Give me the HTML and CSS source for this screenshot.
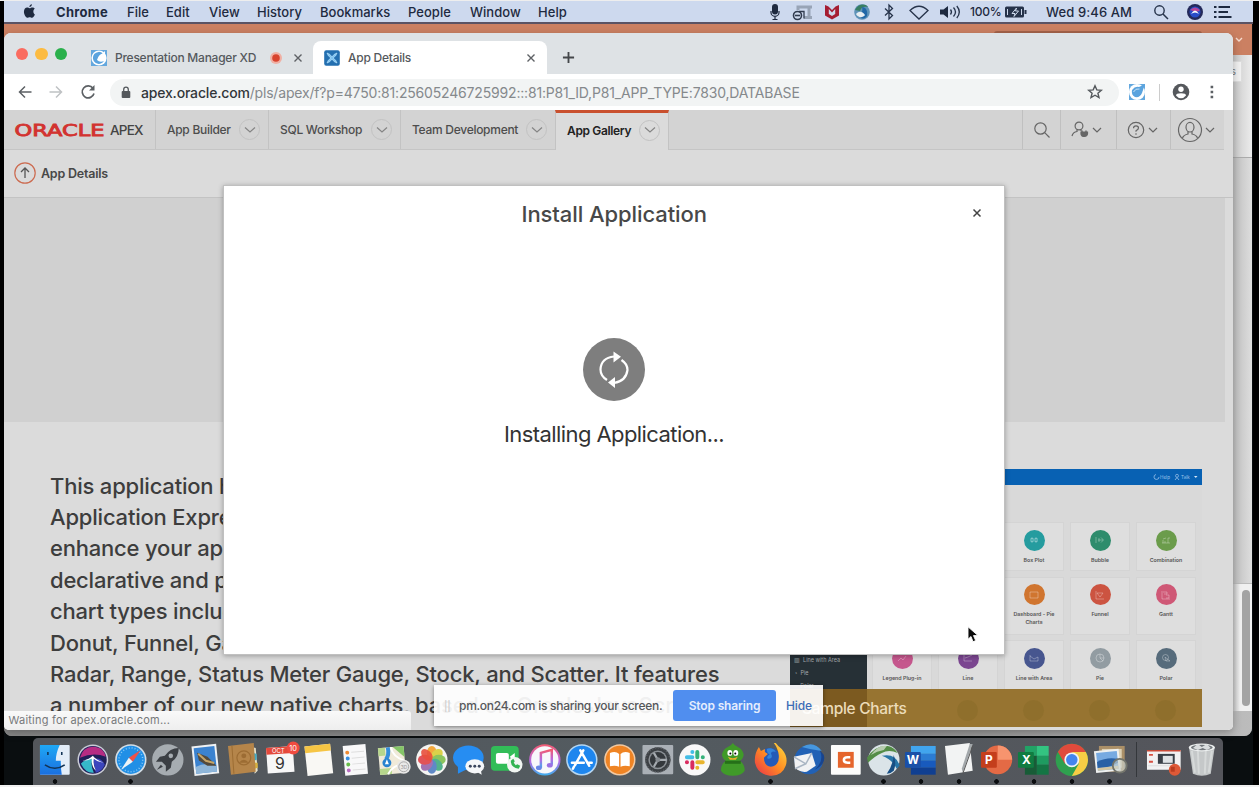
FILE: index.html
```html
<!DOCTYPE html>
<html lang="en">
<head>
<meta charset="utf-8">
<title>App Details</title>
<link rel="stylesheet" href="styles.css">
</head>
<body>
<div class="desktop">

  <!-- Window behind the browser -->
  <div class="back-window">
    <div class="back-title"><span class="back-field"></span><svg class="back-caret" viewBox="0 0 8 6"><path d="M1 1l3 3 3-3" fill="none" stroke="#f6dccf" stroke-width="1.4"/></svg></div>
    <div class="back-ribbon"><span class="back-btn">s</span></div>
    <div class="back-body"></div>
    <div class="back-scroll"><span></span></div>
    <div class="back-foot"></div>
  </div>

  <div class="menubar">
    <div class="menus">
      <svg class="apple" viewBox="0 0 14 16"><path d="M9.6 0.6c.1 1.500-1.200 3-2.700 3C6.700 2.200 8 .8 9.600.6zM12.800 11.700c-.8 1.900-1.900 3.500-3.200 3.500-.9 0-1.300-.6-2.400-.6s-1.500.6-2.400.6C3 15.200 1 11.800 1 8.800c0-2.900 1.700-4.500 3.500-4.500 1.100 0 1.900.7 2.700.7.700 0 1.600-.8 2.900-.8 1 0 2 .5 2.600 1.400-2.200 1.300-1.900 4.900.1 6.100z" fill="#1e2a40"/></svg>
      <b class="m-chrome">Chrome</b><span>File</span><span>Edit</span><span>View</span><span>History</span><span class="m-book">Bookmarks</span><span>People</span><span>Window</span><span>Help</span>
    </div>
    <div class="tray">
      <svg width="14" height="18" viewBox="0 0 14 18"><rect x="4" y="1" width="6" height="10.500" rx="3" fill="#1e2a40"/><path d="M3 8v1.500a4 3.800 0 0 0 8 0V8M7 13v3M4.500 16.500h5" fill="none" stroke="#1e2a40" stroke-width="1.200"/></svg>
      <svg width="22" height="18" viewBox="0 0 22 18"><path d="M6 7V4h14M12 14.500h8M17 4v10" stroke="#98a4b6" stroke-width="3" fill="none"/><circle cx="5.500" cy="12.500" r="4" fill="#cdd9ec" stroke="#303b4e" stroke-width="1.600"/><path d="M3 12.500h5" stroke="#303b4e" stroke-width="1.600"/><path d="M7 8.500h5v7" stroke="#303b4e" stroke-width="1.300" fill="none"/></svg>
      <svg width="18" height="18" viewBox="0 0 16 18"><path d="M1 2l3.500 1.500L8 7l3.500-3.500L15 2v10.500L8 16.500 1 12.500z" fill="#a51d32"/><path d="M4.800 6v5L8 13l3.200-2V6L8 9.500z" fill="#cdd9ec"/></svg>
      <svg width="18" height="18" viewBox="0 0 18 18"><circle cx="9" cy="9" r="7.800" fill="#5f93b8"/><path d="M2 7C5 1 12 0 15 4c-4-1-7 0-8 4z" fill="#387e62"/><path d="M6 12c3-1 4-5 3-8 4 0 6 4 5 9-3 4-7 3-8-1z" fill="#2168a7"/><path d="M3 11c3-3 6-3 9 1-2 3-7 3-9-1z" fill="#e7eef2"/></svg>
      <svg width="12" height="18" viewBox="0 0 12 18"><path d="M2 5.500l7.500 7L6 16V2l3.500 3.500L2 12.500" fill="none" stroke="#26334a" stroke-width="1.300"/></svg>
      <svg width="22" height="18" viewBox="0 0 22 18"><path d="M2 7.500Q11-1 20 7.500L11 16z" fill="none" stroke="#26334a" stroke-width="1.300"/></svg>
      <svg width="24" height="18" viewBox="0 0 24 18"><path d="M1 6.500h3.500L9 3v12l-4.500-3.500H1z" fill="#1e2a40"/><path d="M11.500 6.500q2 2.500 0 5M14.500 4.500q4 4.500 0 9M17.800 3q5 6 0 12" fill="none" stroke="#26334a" stroke-width="1.300"/></svg>
      <span class="t-pct">100%</span>
      <svg width="24" height="18" viewBox="0 0 24 18"><rect x="1" y="3.500" width="19" height="11" rx="1.500" fill="#26334a"/><path d="M21.500 7v4" stroke="#26334a" stroke-width="2"/><path d="M3.500 6v6M17.500 6v6M8 10.500h3l-1 3 4.500-5.500h-3l1-3z" stroke="#cdd9ec" stroke-width="1" fill="#26334a"/></svg>
      <span class="t-clock">Wed 9:46 AM</span>
      <svg width="18" height="18" viewBox="0 0 18 18"><circle cx="7.500" cy="7.500" r="4.700" fill="none" stroke="#26334a" stroke-width="1.400"/><path d="M11 11l5 5" stroke="#26334a" stroke-width="1.500"/></svg>
      <svg width="18" height="18" viewBox="0 0 18 18"><circle cx="9" cy="9" r="8" fill="#242a5b"/><circle cx="9" cy="9" r="5.500" fill="#284cc8"/><path d="M4 7q5-5 10 0-2 3-10 0" fill="#b5469b"/><path d="M5 11q4-7 8 0-4-3-8 0" fill="#fff"/></svg>
      <svg width="20" height="18" viewBox="0 0 20 18"><path d="M1 4h2.500M1 9h2.500M1 14h2.500" stroke="#1e2a40" stroke-width="2"/><path d="M5.500 4H17M5.500 9H15M5.500 14H18.500" stroke="#1e2a40" stroke-width="1.800"/></svg>
    </div>
  </div>

  <!-- Browser window -->
  <div class="browser">
    <div class="tabs">
      <div class="lights"><i class="red"></i><i class="yellow"></i><i class="green"></i></div>
      <div class="tab">
        <svg class="fav" viewBox="0 0 18 18"><rect x="1" y="1" width="16" height="16" fill="#64a8de"/><circle cx="9" cy="9" r="7.600" fill="#fff"/><path d="M13 4.500A6 6 0 1 0 14 12q-4 2-7-1Q9 4.500 13 4.500z" fill="#5aa3de"/><path d="M10 7l5-5v5z" fill="#fff"/></svg>
        <span class="tab-label">Presentation Manager XD</span>
        <svg class="rec" viewBox="0 0 14 14"><circle cx="7" cy="7" r="6" fill="#f0b0a4"/><circle cx="7" cy="7" r="3.800" fill="#d8432e"/></svg>
        <svg class="x" viewBox="0 0 10 10"><path d="M1.500 1.500l7 7M8.500 1.500l-7 7" stroke="#5e6165" stroke-width="1.400"/></svg>
      </div>
      <div class="tab active">
        <svg class="fav" viewBox="0 0 18 18"><rect x="1.200" y="1.200" width="15.600" height="15.600" rx="2" fill="#236fb0"/><path d="M4 4l3 1.500L9 8l2-2.500L14 4l-1.500 3L10 9l2.500 2L14 14l-3-1.500L9 10l-2 2.500L4 14l1.500-3L8 9 5.500 7z" fill="#7cc4f2" stroke="#b8e1fa" stroke-width=".7"/></svg>
        <span class="tab-label">App Details</span>
        <svg class="x" viewBox="0 0 10 10"><path d="M1.500 1.500l7 7M8.500 1.500l-7 7" stroke="#5e6165" stroke-width="1.400"/></svg>
      </div>
      <svg class="plus" viewBox="0 0 14 14"><path d="M7 1v12M1 7h12" stroke="#44474a" stroke-width="2"/></svg>
    </div>

    <div class="toolbar">
      <svg width="14" height="14" viewBox="0 0 14 14"><path d="M13.500 7H1.500M7 1.500L1.500 7 7 12.500" fill="none" stroke="#5c6064" stroke-width="1.500"/></svg>
      <svg width="14" height="14" viewBox="0 0 14 14"><path d="M.5 7h12M7 1.500L12.500 7 7 12.500" fill="none" stroke="#bfc2c4" stroke-width="1.500"/></svg>
      <svg width="16" height="16" viewBox="0 0 16 16"><path d="M13 4.200A6 6 0 1 0 14 9.500" fill="none" stroke="#5c6064" stroke-width="1.700"/><path d="M14.500 1v5.500H9z" fill="#5c6064"/></svg>
      <div class="omnibox">
        <svg width="10" height="13" viewBox="0 0 10 13"><rect x=".7" y="5" width="8.600" height="7" rx="1" fill="#55595d"/><path d="M2.700 5V3.500a2.300 2.300 0 0 1 4.600 0V5" fill="none" stroke="#55595d" stroke-width="1.300"/></svg>
        <span class="url"><b>apex.oracle.com</b>/pls/apex/f?p=4750:81:25605246725992:::81:P81_ID,P81_APP_TYPE:7830,DATABASE</span>
        <svg class="star" width="16" height="16" viewBox="0 0 16 16"><path d="M8 1.800l1.800 4.100 4.500.4-3.400 2.900 1.100 4.400L8 11.200l-4 2.400 1.100-4.400-3.400-2.900 4.500-.4z" fill="none" stroke="#55595d" stroke-width="1.400"/></svg>
      </div>
      <svg class="ext" viewBox="0 0 18 18"><path d="M1 1h16v16H1z" fill="#64a8de"/><circle cx="9" cy="9" r="8" fill="#fff"/><path d="M17 1l-3 9q-2 5-7 4-4-2-3-7 3-4 7-3z" fill="#5aa3de"/><path d="M5.500 9q2-4 6-3" stroke="#c8e3f7" fill="none"/></svg>
      <i class="tb-sep"></i>
      <svg class="avatar" viewBox="0 0 18 18"><circle cx="9" cy="9" r="8.300" fill="#55585c"/><circle cx="9" cy="6.300" r="2.700" fill="#fff"/><path d="M4 12.500q0-2.200 5-2.200t5 2.200q-2 2.700-5 2.700t-5-2.700" fill="#fff"/></svg>
      <svg class="kebab" viewBox="0 0 4 16"><path d="M.6 1.700h2.600v2.600H.6zM.6 6.700h2.600v2.600H.6zM.6 11.700h2.600v2.600H.6z" fill="#5c6064"/></svg>
    </div>

    <div class="page">
      <div class="apex-nav">
        <div class="brand"><svg class="oracle" viewBox="0 0 93 16"><text x="0.500" y="13.500" textLength="90" lengthAdjust="spacingAndGlyphs">ORACLE</text></svg><span>APEX</span></div>
        <div class="nav n1"><span>App Builder</span><i><svg viewBox="0 0 12 8"><path d="M1 1.500l5 4.500 5-4.500"/></svg></i></div>
        <div class="nav n2"><span>SQL Workshop</span><i><svg viewBox="0 0 12 8"><path d="M1 1.500l5 4.500 5-4.500"/></svg></i></div>
        <div class="nav n3"><span>Team Development</span><i><svg viewBox="0 0 12 8"><path d="M1 1.500l5 4.500 5-4.500"/></svg></i></div>
        <div class="nav n4 current"><span>App Gallery</span><i><svg viewBox="0 0 12 8"><path d="M1 1.500l5 4.500 5-4.500"/></svg></i></div>
        <div class="tools">
          <div class="tool t1"><svg width="18" height="18" viewBox="0 0 18 18"><circle cx="7.500" cy="7.500" r="5.700"/><path d="M11.700 11.700l4.800 4.800"/></svg></div>
          <div class="tool t2"><svg width="18" height="18" viewBox="0 0 18 18"><circle cx="8" cy="5" r="3.900"/><path d="M1 15q1-4 5-4.500V8.500M10 8.500v1.500"/><path d="M11 11v-1.500M15 11v-1.500" stroke-width="1.400"/><path d="M10 11h6.500v2q-.5 2.500-3.200 2.500T10 13z" fill="#666"/></svg><svg class="car" viewBox="0 0 10 6"><path d="M1 1l4 4 4-4"/></svg></div>
          <div class="tool t3"><svg width="18" height="18" viewBox="0 0 18 18"><circle cx="9" cy="9" r="7.700"/><path d="M6.500 7.300q0-2.500 2.500-2.500t2.500 2.200q0 1.300-2.500 2.800v1M9 12.300v1.500"/></svg><svg class="car" viewBox="0 0 10 6"><path d="M1 1l4 4 4-4"/></svg></div>
          <div class="tool t4"><svg width="26" height="26" viewBox="0 0 26 26"><circle cx="13" cy="13" r="11.500"/><ellipse cx="13" cy="10.200" rx="4" ry="4.800"/><path d="M5.500 21q1-3 5.500-4v-2.500M20.500 21q-1-3-5.500-4v-2.500"/></svg><svg class="car" viewBox="0 0 10 6"><path d="M1 1l4 4 4-4"/></svg></div>
        </div>
      </div>
      <div class="crumb"><svg width="22" height="22" viewBox="0 0 22 22"><circle cx="11" cy="11" r="10.200" fill="none" stroke="#cc6b50" stroke-width="1.200"/><path d="M11 16V6.500M7 10l4-4 4 4" fill="none" stroke="#555" stroke-width="1.300"/></svg><b>App Details</b></div>
      <div class="hero"></div>
      <div class="content">
        <p class="desc">
          <span>This application highlights the Oracle</span>
          <span>Application Express native charts to</span>
          <span>enhance your application with</span>
          <span>declarative and plug-in charts. The</span>
          <span>chart types include Area, Bar, Bubble,</span>
          <span>Donut, Funnel, Gantt, Line, Pie, Polar,</span>
          <span>Radar, Range, Status Meter Gauge, Stock, and Scatter. It features</span>
          <span>a number of our new native charts, based on Oracle JavaScript</span>
        </p>
        <div class="shot">
          <div class="shot-bar"><svg width="46" height="8" viewBox="0 0 46 8"><path d="M3 1.500a2.500 2.500 0 1 0 3 2.500M22 7l2-2.500 2 2.500" fill="none" stroke="#9cc2ea" stroke-width=".8"/><circle cx="24" cy="2.800" r="1.500" fill="none" stroke="#9cc2ea" stroke-width=".7"/><path d="M41 3h3.500l-1.700 2z" fill="#d7e7f8"/><text x="7" y="6" font-size="4.600">Help</text><text x="28" y="6" font-size="4.600">Talk</text></svg></div>
          <div class="shot-main">
            <div class="side"><span>▥ &nbsp;Line with Area</span><span>◔ &nbsp;Pie</span><span>◌ &nbsp;Polar</span></div>
            <div class="tiles">
              <div></div><div></div>
              <div><i class="c1"><svg viewBox="0 0 10 10"><path d="M3 2v6M7 2v6M1.800 3.500h2.500v3H1.800zM5.800 3.500h2.500v3H5.800z"/></svg></i>Box Plot</div>
              <div><i class="c2"><svg viewBox="0 0 10 10"><path d="M1 2v6M4 3v4M6 2.500l2.500 2.500L6 7.500M3 5h5"/></svg></i>Bubble</div>
              <div><i class="c3"><svg viewBox="0 0 10 10"><path d="M1 8h8M2 8V5M4 8V6M7 8V3h2M2 4l3-1"/></svg></i>Combination</div>
              <div></div><div></div>
              <div><i class="c4"><svg viewBox="0 0 10 10"><path d="M1 2h8v6H1z"/></svg></i>Dashboard - Pie<br>Charts</div>
              <div><i class="c5"><svg viewBox="0 0 10 10"><path d="M1 1v8h8M2 3h6L5 7z"/></svg></i>Funnel</div>
              <div><i class="c6"><svg viewBox="0 0 10 10"><path d="M1 1v8h8M2 2h4v2H3M5 5h3v3H5"/></svg></i>Gantt</div>
              <div><i class="c7"><svg viewBox="0 0 10 10"><path d="M1 8l3-3 2 2 3-4"/></svg></i>Legend Plug-in</div>
              <div><i class="c8"><svg viewBox="0 0 10 10"><path d="M1 1v7h8M2 5l3-1 4-2"/></svg></i>Line</div>
              <div><i class="c9"><svg viewBox="0 0 10 10"><path d="M1 2v6h8V4L5 6 1 3"/></svg></i>Line with Area</div>
              <div><i class="c10"><svg viewBox="0 0 10 10"><circle cx="5" cy="5" r="4"/><path d="M5 1v4l3 3M5 5H9"/></svg></i>Pie</div>
              <div><i class="c11"><svg viewBox="0 0 10 10"><circle cx="4.500" cy="4.500" r="3"/><path d="M4 4l5 4H5z"/></svg></i>Polar</div>
            </div>
          </div>
          <div class="shot-title"><span>Sample Charts</span><div class="ghosts"><i></i><i></i><i></i><i></i></div></div>
        </div>
      </div>

      <div class="status">Waiting for apex.oracle.com...</div>

      <div class="modal">
        <div class="modal-head"><h1>Install Application</h1><svg viewBox="0 0 10 10"><path d="M1.500 1.500l7 7M8.500 1.500l-7 7" stroke="#444" stroke-width="1.500"/></svg></div>
        <svg class="spinner" viewBox="0 0 62 63" preserveAspectRatio="none"><ellipse cx="31" cy="31.500" rx="31" ry="31.500" fill="#7e7e7e"/><path d="M24 42Q17.500 38 17.500 31.500 18 20 31 18.500M38.500 22Q44.500 26 44.500 32 43 43 31 45" fill="none" stroke="#fff" stroke-width="2.200"/><path d="M30.500 13.500l7.500 5.300-7.500 5.700zM32 39v11l-7-5.500z" fill="#fff"/></svg>
        <p>Installing Application...</p>
      </div>
    </div>
  </div>

  <div class="share">
    <i>||</i><span>pm.on24.com is sharing your screen.</span><button>Stop sharing</button><a>Hide</a>
  </div>

  <svg class="cursor" viewBox="0 0 12 17"><path d="M1 .8v12.500l3-2.800 2 5.200 2.700-1.100-2.200-5H11z" fill="#0a0a0a" stroke="#fff" stroke-width=".9"/></svg>

  <div class="dock">
    <!-- Finder -->
    <svg class="run" viewBox="0 0 38 38"><defs><linearGradient id="fb" x2="0" y2="1"><stop stop-color="#1fa8f5"/><stop offset="1" stop-color="#1a6fe0"/></linearGradient></defs><rect x="4" y="4" width="30" height="30" rx="1" fill="#e3edf8"/><path d="M4 4h20q-4 8-4 16h5q0 8 1 14H4z" fill="url(#fb)"/><path d="M12 11v3M26 11v3M9 24q10 7 20 0" fill="none" stroke="#123456" stroke-width="1.600"/></svg>
    <!-- Siri -->
    <svg viewBox="0 0 38 38"><circle cx="19" cy="19" r="15.500" fill="#c9cbd6"/><circle cx="19" cy="19" r="14" fill="#20205a"/><path d="M6 17Q10 4 22 6q9 2 10 10-12-5-26 1z" fill="#b62c83"/><path d="M7 23q5 10 13 9-4-9-1-14-8 0-12 5z" fill="#36b9c9"/><path d="M19 18q9-2 12 6-3 7-9 8z" fill="#3b45bd"/><path d="M8 20q7-1 11-5 3 4 11 7-7-1-10-4-1 6 2 12-5-5-4-12-4 2-10 2z" fill="#fff"/></svg>
    <!-- Safari -->
    <svg class="run" viewBox="0 0 38 38"><circle cx="19" cy="19" r="15.800" fill="#d4dee6"/><circle cx="19" cy="19" r="14.200" fill="#218fe6"/><circle cx="19" cy="19" r="12" fill="none" stroke="#89c9f6" stroke-width="1.500" stroke-dasharray="1 2"/><path d="M29 9L17 17l4 4z" fill="#ee5149"/><path d="M9 29l8-12 4 4z" fill="#eef3f7"/></svg>
    <!-- Launchpad -->
    <svg viewBox="0 0 38 38"><circle cx="19" cy="19" r="15.800" fill="#a6acb1"/><path d="M30 7q-9 0-14 8l-5 1-4 5 6 0 4 4 0 6 5-4 1-6q7-5 7-14z" fill="#3b3f44"/><circle cx="22" cy="15" r="2.300" fill="#a6acb1"/><path d="M12 24l-4 5 6-3z" fill="#3b3f44"/></svg>
    <!-- Mail -->
    <svg viewBox="0 0 38 38"><g transform="rotate(-6 19 19)"><path d="M6 4h25v30H6z" fill="#eef1f4"/><path d="M8 6h21v26H8z" fill="#3b82cf"/><path d="M8 25q10-4 21 1v6H8z" fill="#8fb6d9"/><path d="M11 11l10 5 8 10-9-1-8-6z" fill="#534a3d"/><path d="M12 12l7 8 8 3" stroke="#c5a467" stroke-width="2" fill="none"/></g></svg>
    <!-- Contacts -->
    <svg viewBox="0 0 38 38"><path d="M28 6l4 1 2 23-3 3z" fill="#e9e4cc"/><path d="M30 12l3 1v6l-3 1z" fill="#43aac3"/><path d="M31 22l3 0v5l-3 1z" fill="#d8b13f"/><path d="M4 5l26-3 2 29-25 3z" fill="#b5854a"/><path d="M8 5l2 28" stroke="#9c6c33"/><circle cx="20" cy="17" r="7" fill="none" stroke="#9c6c33" stroke-width="1.200"/><circle cx="20" cy="15" r="2.500" fill="#9c6c33"/><path d="M15 22q5-6 10 0" fill="#9c6c33"/></svg>
    <!-- Calendar -->
    <svg viewBox="0 0 38 38"><g transform="rotate(-4 18 20)"><path d="M5 6h27v26H5z" fill="#f7f7f7"/><path d="M5 6h27v7H5z" fill="#e4493c"/></g><text x="10" y="12.500" font-size="6" fill="#fff">OCT</text><text x="13" y="28" font-size="16" fill="#333">9</text><circle cx="31.500" cy="7" r="6.500" fill="#f04b40"/><text x="27.500" y="10" font-size="7.500" fill="#fff">10</text></svg>
    <!-- Notes -->
    <svg viewBox="0 0 38 38"><g transform="rotate(-6 19 19)"><path d="M6 4h26v30H6z" fill="#f9f8f4"/><path d="M6 4h26v7H6z" fill="#f6c544"/></g></svg>
    <!-- Reminders -->
    <svg viewBox="0 0 38 38"><g transform="rotate(-5 19 19)"><path d="M7 4h23v30H7z" fill="#f8f8f9"/><g><circle cx="11" cy="11" r="2" fill="#f08b32"/><circle cx="11" cy="17" r="2" fill="#378ee0"/><circle cx="11" cy="23" r="2" fill="#67bd4a"/><circle cx="11" cy="29" r="2" fill="#b96cc2"/></g><path d="M15 11h13M15 17h13M15 23h13M15 29h13" stroke="#dedede"/></g></svg>
    <!-- Maps -->
    <svg viewBox="0 0 38 38"><g transform="rotate(-5 19 19)"><path d="M4 6h26v27H4z" fill="#f0ead9"/><path d="M19 6h11v11z" fill="#85c568"/><path d="M4 6h7v8H4zM4 27h12v6H4z" fill="#b6d68c"/><path d="M14 6q1 8-3 12" stroke="#338edc" stroke-width="4" fill="none"/><path d="M17 6q1 10 13 15M12 33q5-9 18-9" stroke="#fff" stroke-width="2" fill="none"/></g><circle cx="12" cy="22" r="4.500" fill="#2782cf"/><path d="M12 18.500l2 5h-4z" fill="#fff"/><circle cx="29" cy="26" r="7" fill="#e9e9e8"/><circle cx="29" cy="26" r="5" fill="none" stroke="#aaa"/><text x="26" y="28.500" font-size="5" fill="#999">3D</text></svg>
    <!-- Photos -->
    <svg viewBox="0 0 38 38"><circle cx="19" cy="19" r="15.800" fill="#f4f4f2"/><g opacity=".92"><ellipse cx="19" cy="12" rx="5" ry="7" fill="#f5a32e"/><ellipse cx="19" cy="12" rx="5" ry="7" fill="#d9cf3c" transform="rotate(45 19 19)"/><ellipse cx="19" cy="12" rx="5" ry="7" fill="#83c252" transform="rotate(90 19 19)"/><ellipse cx="19" cy="12" rx="5" ry="7" fill="#45ad84" transform="rotate(135 19 19)"/><ellipse cx="19" cy="12" rx="5" ry="7" fill="#5381c4" transform="rotate(180 19 19)"/><ellipse cx="19" cy="12" rx="5" ry="7" fill="#9c67ad" transform="rotate(225 19 19)"/><ellipse cx="19" cy="12" rx="5" ry="7" fill="#e0464c" transform="rotate(270 19 19)"/><ellipse cx="19" cy="12" rx="4.500" ry="7" fill="#e8432f" fill-opacity=".9" transform="rotate(315 19 19)"/></g></svg>
    <!-- Messages -->
    <svg viewBox="0 0 38 38"><ellipse cx="18.500" cy="17" rx="15.500" ry="12.500" fill="#268df2"/><path d="M8 25l0 8 8-4z" fill="#268df2"/><ellipse cx="25" cy="25.500" rx="9.500" ry="7.200" fill="#f5f7f9"/><path d="M27 31l5 3-1-5z" fill="#f5f7f9"/><circle cx="20.500" cy="25.500" r="1.500" fill="#3b465e"/><circle cx="25" cy="25.500" r="1.500" fill="#3b465e"/><circle cx="29.500" cy="25.500" r="1.500" fill="#3b465e"/></svg>
    <!-- FaceTime -->
    <svg viewBox="0 0 38 38"><rect x="3" y="5" width="28" height="25" rx="4" fill="#32bd58"/><rect x="8" y="12" width="13" height="11" rx="2" fill="#fff"/><path d="M22 16l5-4v10z" fill="#fff"/><circle cx="27" cy="24" r="7.800" fill="#f1f6f2"/><path d="M23 20q0 7 8 8l1.500-3-3-1.500-1.500 1-2-2.500 1-1.500-1.500-2.500z" fill="#32b352"/></svg>
    <!-- iTunes -->
    <svg viewBox="0 0 38 38"><defs><linearGradient id="it" x2="0" y2="1"><stop stop-color="#f35b70"/><stop offset=".55" stop-color="#b46be3"/><stop offset="1" stop-color="#3eb0ee"/></linearGradient></defs><circle cx="19" cy="19" r="15.800" fill="url(#it)"/><circle cx="19" cy="19" r="13.800" fill="#f8f8fb"/><path d="M15 27V12l11-3v15" fill="none" stroke="url(#it)" stroke-width="2.500"/><ellipse cx="13" cy="27" rx="3" ry="2.300" fill="#6988e6"/><ellipse cx="24" cy="24.500" rx="3" ry="2.300" fill="#9b70e3"/></svg>
    <!-- App Store -->
    <svg viewBox="0 0 38 38"><circle cx="19" cy="19" r="15.800" fill="#b6d7f2"/><circle cx="19" cy="19" r="14.300" fill="#1e86ee"/><path d="M20.500 9.500L12 24.500M17.500 9.500L26.500 25M9 22h12M24.500 22H29M11 26l-1 2" stroke="#fff" stroke-width="2.500" stroke-linecap="round"/></svg>
    <!-- Books -->
    <svg viewBox="0 0 38 38"><circle cx="19" cy="19" r="15.800" fill="#f2c9a1"/><circle cx="19" cy="19" r="14.300" fill="#ef8424"/><path d="M9 12q6-2 9.300 1v13q-4-2-9.300-.5zM29 12q-6-2-9.300 1v13q4-2 9.300-.5z" fill="#fff"/></svg>
    <!-- System Preferences -->
    <svg viewBox="0 0 38 38"><rect x="3.500" y="4" width="31" height="29.500" rx="1" fill="#aab0b6"/><circle cx="19" cy="19" r="12.800" fill="#3c4044"/><circle cx="19" cy="19" r="9.500" fill="#8c9196"/><circle cx="19" cy="19" r="8" fill="#34383c"/><path d="M19 19l-4-7M19 19h9M19 19l-4 7" stroke="#a6abb0" stroke-width="2.200"/><circle cx="19" cy="19" r="12.200" fill="none" stroke="#5a5f64" stroke-width="1.500" stroke-dasharray="1.500 1.500"/><circle cx="19" cy="19" r="2.500" fill="#868b90"/></svg>
    <!-- Slack -->
    <svg viewBox="0 0 38 38"><circle cx="19" cy="19" r="15.800" fill="#f8f8f8"/><g stroke-width="4" stroke-linecap="round"><path d="M16.500 11v.1M11 16.500h5.500" stroke="#42bde6"/><path d="M21.500 11v5.500M27 16.500h.1" stroke="#37b27a"/><path d="M21.500 21.500h5.500M21.500 27v.1" stroke="#e9b52d"/><path d="M11 21.500h.1M16.500 21.500v5.500" stroke="#d92c60"/></g></svg>
    <!-- Adium -->
    <svg viewBox="0 0 38 38"><path d="M19 2q2 3 5 4 5 2 6 8-1 5-4 6 5 3 5 10-3 5-12 5T7 30q0-7 5-10-3-1-4-6 1-6 6-8 3-1 5-4z" fill="#409a29"/><path d="M11 20h16v3H11z" fill="#267019"/><ellipse cx="16" cy="12" rx="2.500" ry="3" fill="#fff"/><ellipse cx="22" cy="12" rx="2.500" ry="3" fill="#fff"/><circle cx="16.500" cy="12.500" r="1"/><circle cx="21.500" cy="12.500" r="1"/><path d="M14 16q5 3 10 0l-2 3h-6z" fill="#ecb02b"/></svg>
    <!-- Firefox -->
    <svg class="run" viewBox="0 0 38 38"><defs><linearGradient id="ff" x1="1" x2="0" y2="1"><stop stop-color="#ffde3e"/><stop offset=".5" stop-color="#ff8a23"/><stop offset="1" stop-color="#e8304c"/></linearGradient></defs><circle cx="18" cy="18" r="11" fill="#235ab8"/><path d="M24 2q2 3 6 6 7 8 4 17-4 11-16 10T3 22Q2 13 7 6l2 4 4-2q0 2 0 3l3 2-4 4q0 8 7 9 9-1 8-12-1-7-5-12z" fill="url(#ff)"/><path d="M15 8q6-2 9 3-3-1-5 1 3 6-3 6-2-2 2-5-3 0-3-5z" fill="#3484da"/></svg>
    <!-- Thunderbird -->
    <svg viewBox="0 0 38 38"><circle cx="20" cy="19" r="14.500" fill="#2161b5"/><path d="M13 6q12-7 20 4l-12-2z" fill="#4697df"/><path d="M5 16l18-4 4 13-9 6q-7 1-12-4z" fill="#f1f2f4"/><path d="M5 16l12 7 6-11M17 23l-11 5" fill="none" stroke="#a9b5c3" stroke-width="1.500"/><path d="M31 9q5 11-5 20 12-6 9-15z" fill="#18448e"/></svg>
    <!-- Camtasia -->
    <svg viewBox="0 0 38 38"><rect x="4" y="4" width="30" height="30" rx="1" fill="#fcfcfb"/><path d="M11 11h16v16H11z" fill="#e5652c"/><path d="M23.500 16.500h-2.500q-4 0-4 2.700t4 2.700h2.500" fill="none" stroke="#fff" stroke-width="2.500"/></svg>
    <!-- Network client -->
    <svg class="run" viewBox="0 0 38 38"><circle cx="19" cy="19" r="15.800" fill="#dbe4e8"/><path d="M2 17q8-13 21-12 6 1 10 7-9-4-16 0-7 3-14 10z" fill="#548d47"/><path d="M6 14Q13 4 22 5l-3 4q-7 1-13 5z" fill="#b8cdb0"/><path d="M17 15q14-3 18 10l-3 3q-4-9-15-13z" fill="#2875a7"/><path d="M29 14q-1 11-7 19 4 0 7-3 3-7 0-16z" fill="#184f84"/></svg>
    <!-- Word -->
    <svg class="run" viewBox="0 0 38 38"><path d="M9 5h25v8H9z" fill="#41a5ee"/><path d="M9 13h25v7H9z" fill="#2b7cd3"/><path d="M9 20h25v7H9z" fill="#185abd"/><path d="M9 27h25v7H9z" fill="#103f91"/><rect x="3" y="11" width="16" height="16" rx="1" fill="#1a50a8"/><text x="4.800" y="23.500" font-size="12" font-weight="700" fill="#fff">W</text></svg>
    <!-- Text editor -->
    <svg class="run" viewBox="0 0 38 38"><path d="M5 5l25-3 3 28-25 4z" fill="#f2f3f3"/><path d="M33 3L23 32l-1-4 8-25z" fill="#a2a7aa"/><path d="M33 5L23 33" stroke="#555" stroke-width="1"/></svg>
    <!-- PowerPoint -->
    <svg class="run" viewBox="0 0 38 38"><circle cx="20" cy="19" r="14.500" fill="#e46a45"/><path d="M20 4.500A14.500 14.500 0 0 1 34.500 19H20z" fill="#f7946e"/><rect x="3" y="11" width="16" height="16" rx="1" fill="#c43e1c"/><text x="7" y="23.500" font-size="12" font-weight="700" fill="#fff">P</text></svg>
    <!-- Excel -->
    <svg class="run" viewBox="0 0 38 38"><path d="M10 5h12v10H10z" fill="#21a366"/><path d="M22 5h12v10H22z" fill="#33c481"/><path d="M10 15h12v19H10z" fill="#185c37"/><path d="M22 15h12v9H22z" fill="#1e9b60"/><path d="M22 24h12v10H22z" fill="#147544"/><rect x="3" y="11" width="16" height="16" rx="1" fill="#107c41"/><text x="7" y="23.500" font-size="12" font-weight="700" fill="#fff">X</text></svg>
    <!-- Chrome -->
    <svg class="run" viewBox="0 0 38 38"><circle cx="19" cy="19" r="16.300" fill="#2fa04f"/><path d="M19 19L4.900 10.800A16.300 16.300 0 0 1 33.100 10.800z" fill="#e04a3c"/><path d="M19 11h14.200A16.300 16.300 0 0 1 19 35.300L26 23z" fill="#f7cd45"/><path d="M5 11l7 12 3-9 5-3z" fill="#e04a3c"/><circle cx="19" cy="19" r="7.500" fill="#f2f4f6"/><circle cx="19" cy="19" r="5.800" fill="#4485ee"/></svg>
    <!-- Preview -->
    <svg class="run" viewBox="0 0 38 38"><path d="M8 5h26v26H8z" fill="#aa8f67"/><path d="M11 8h20v19H11z" fill="#ddd1b5"/><g transform="rotate(-6 17 20)"><path d="M4 9h25v22H4z" fill="#eef0f0"/><path d="M6 11h21v18H6z" fill="#77aae1"/><path d="M6 20q10-4 21-1v4q-11 5-21 3z" fill="#2a61a5"/><path d="M6 26h21v3H6z" fill="#d3c5a1"/></g><circle cx="29" cy="25" r="7" fill="#ccd4d0" fill-opacity=".65" stroke="#72746c" stroke-width="1.800"/></svg>
    <i class="dock-sep"></i>
    <!-- Minimised presentation -->
    <svg viewBox="0 0 38 38"><path d="M2 9h34v20H2z" fill="#f2f2f2"/><path d="M2 9h34v1.500H2z" fill="#c94b38"/><path d="M4 14h4M4 21h4" stroke="#d75041" stroke-width="2"/><path d="M13 13h17v10H13z" fill="#3a4047"/><path d="M18 15h10v7H18z" fill="#dfe3e5"/><path d="M3 25h22" stroke="#ddd"/><circle cx="30" cy="29" r="6" fill="#dd5937"/><path d="M26 26h4v5h-4z" fill="#b93c20"/></svg>
    <!-- Trash -->
    <svg viewBox="0 0 38 38"><path d="M6 6h26l-4 27q-9 4-18 0z" fill="#c5c8c9"/><path d="M9 10l3 22M15 10l1 23M23 10l-1 23M29 10l-3 22" stroke="#d6d9d9" stroke-width="2"/><ellipse cx="19" cy="6.500" rx="13.200" ry="4" fill="#ecefef"/><ellipse cx="19" cy="6.500" rx="11" ry="2.800" fill="#70757a"/><path d="M10 7l5-4 4 3 5-3 4 4-4 2-4-2-5 2z" fill="#d9dddf"/></svg>
  </div>
</div>
</body>
</html>
```
FILE: styles.css
```css
* { box-sizing: border-box; }
body { margin: 0; width: 1259px; height: 787px; overflow: hidden; background: #000; border-top: 1px solid #eee; border-bottom: 2px solid #f0f0f0; font-family: Inter, "Liberation Sans", sans-serif; }
svg { display: block; flex: none; }
.desktop { position: absolute; left: 4px; top: 1px; width: 1249px; height: 784px; overflow: hidden; background: #0a0e10; }

/* Menu bar */
.menubar { display: flex; height: 23px; background: #cdd9ee; border-bottom: 2px solid #5b5364; position: relative; font-size: 13px; line-height: 22px; color: #1e2a40; font-weight: 500; }
.menus { display: grid; grid-template-columns: 33px 71px 39px 43px 48px 63px 88px 62px 68px 60px; padding-left: 19px; width: 765px; white-space: nowrap; }
.menus span { letter-spacing: .03px; }
.apple { width: 13px; height: 16px; margin-top: 2px; }
.m-chrome { font-weight: 700; letter-spacing: .3px; }
.tray { display: grid; grid-template-columns: 24px 31px 30px 30px 25px 31px 31px 34px 42px 106px 34px 27px 20px; align-items: center; height: 21px; margin-left: -1px; white-space: nowrap; }
.t-pct { font-size: 12px; letter-spacing: -.2px; }
.t-clock { font-size: 13px; letter-spacing: .1px; }

/* Window behind */
.back-window { position: absolute; left: 0; top: 23px; width: 1248px; height: 712px; border-radius: 0 0 8px 8px; overflow: hidden; background: #999; display: flex; flex-direction: column; }
.back-title { height: 31px; background: #cb8062; display: flex; justify-content: flex-end; align-items: flex-start; }
.back-field { width: 208px; height: 20px; margin: 7px 33px 0 0; background: #a56349; border-radius: 3px; }
.back-caret { width: 8px; height: 6px; margin: 13px 9px 0 0; }
.back-ribbon { height: 103px; background: linear-gradient(90deg, #c9c9c9 1229px, #ececec); border-bottom: 1px solid #aaa; display: flex; justify-content: flex-end; }
.back-btn { width: 30px; height: 21px; margin: 6px 10px 0 0; background: #f1f1f1; border: 1px solid #ddd; font-size: 10px; line-height: 19px; text-align: right; padding-right: 5px; color: #777; }
.back-body { flex: 1; background: linear-gradient(90deg, #bdbdbd 1229px, #dedede); }
.back-scroll { height: 129px; border-top: 1px solid #bbb; border-bottom: 1px solid #bbb; background: linear-gradient(90deg, #c4c4c4 1229px, #f0f0f0 1236px); display: flex; justify-content: flex-end; }
.back-scroll span { width: 8px; height: 116px; margin: 6px 2px 0 0; border-radius: 4px; background: #a3a3a3; }
.back-foot { height: 24px; background: linear-gradient(90deg, #8a8a8a, #8f8f8f 70%, #bcbcbc); }

/* Browser */
.browser { position: absolute; left: 0; top: 32px; width: 1229px; height: 697px; border-radius: 7px 7px 5px 5px; overflow: hidden; background: #fff; display: flex; flex-direction: column; box-shadow: 0 3px 9px rgba(0,0,0,.28); }
.tabs { height: 41px; background: #dee2e5; display: flex; align-items: flex-end; flex: none; }
.lights { display: flex; gap: 7px; padding: 0 16px 14px 11.500px; width: 79px; }
.lights i { width: 12.500px; height: 12.500px; border-radius: 50%; flex: none; }
.red { background: #fa6c60; }
.yellow { background: #fcbb41; }
.green { background: #2ab04c; }
.tab { height: 33px; width: 230px; display: flex; align-items: center; padding: 0 10px 0 7px; font-size: 12px; color: #55595d; font-weight: 500; white-space: nowrap; }
.tab.active { background: #fff; border-radius: 8px 8px 0 0; width: 234px; padding: 0 11px 0 10px; }
.fav { width: 18px; height: 18px; margin-right: 7px; }
.tab-label { letter-spacing: -.25px; }
.tab .x { width: 10px; height: 10px; margin-left: auto; }
.rec { width: 14px; height: 14px; margin-left: auto; margin-right: -2px; }
.plus { width: 13px; height: 13px; margin: 0 0 10px 15px; }
.toolbar { height: 36px; display: flex; align-items: center; padding: 0 0 0 14px; flex: none; }
.toolbar > svg:nth-child(2) { margin-left: 17px; }
.toolbar > svg:nth-child(3) { margin-left: 17px; }
.omnibox { flex: 0 0 1009px; height: 27px; border-radius: 14px; margin-left: 14px; padding: 0 16px 0 11px; background: #f2f4f4; display: flex; align-items: center; margin-right: -4px; }
.url { font-size: 14px; color: #85898c; margin-left: 10px; white-space: nowrap; letter-spacing: -.18px; }
.url b { font-weight: 500; color: #33373a; }
.star { margin-left: auto; }
.ext { width: 18px; height: 18px; margin-left: 13px; }
.tb-sep { width: 1px; height: 17px; background: #ccc; margin: 0 12px 0 13px; }
.avatar { width: 18px; height: 18px; }
.kebab { width: 4px; height: 16px; margin-left: 20px; }

/* Page */
.page { flex: 1; position: relative; background: #dbdbdb; overflow: hidden; }
.apex-nav { height: 40px; width: 1220px; background: #d3d3d3; border-bottom: 1px solid #c5c5c5; display: flex; font-size: 12px; color: #4d4d4d; font-weight: 500; letter-spacing: -.28px; }
.brand { width: 151px; padding-left: 10px; display: flex; align-items: center; font-size: 13.500px; letter-spacing: -.8px; color: #444; }
.oracle { width: 93px; height: 16px; margin-right: 3px; }
.oracle text { font-family: "DejaVu Sans", sans-serif; font-size: 15px; fill: #d23330; stroke: #d23330; stroke-width: .8px; letter-spacing: 0; }
.nav { border-left: 1px solid #c3c3c3; display: flex; align-items: center; justify-content: space-between; padding: 0 8px 0 11px; white-space: nowrap; }
.n1 { width: 113px; }
.n2 { width: 132px; }
.n3 { width: 155px; }
.n4 { width: 114px; }
.nav i { width: 21px; height: 21px; border: 1px solid #c2c2c2; border-radius: 50%; display: grid; place-items: center; }
.nav i svg { width: 12px; height: 8px; fill: none; stroke: #858585; stroke-width: 1.200; }
.current { height: 40px; background: #dbdbdb; border-top: 3px solid #c9502e; border-right: 1px solid #c3c3c3; color: #222; font-weight: 600; padding-bottom: 3px; letter-spacing: -.35px; }
.tools { margin-left: auto; display: flex; }
.tool { border-left: 1px solid #c0c0c0; display: flex; align-items: center; gap: 3px; padding-left: 10px; }
.tool svg { fill: none; stroke: #666; stroke-width: 1.200; }
.t1 { width: 38px; }
.t2 { width: 56px; }
.t3 { width: 54px; }
.t4 { width: 54px; padding-left: 6px; gap: 2px; }
.car { width: 10px; height: 6px; }
.crumb { height: 48px; border-bottom: 1px solid #c3c3c3; display: flex; align-items: center; gap: 5px; padding: 0 0 1px 10px; font-size: 12.500px; color: #484848; }
.crumb b { font-weight: 600; letter-spacing: -.22px; }
.hero { height: 224px; width: 1221px; background: #d0d0d0; }
.content { display: flex; justify-content: space-between; padding: 47px 31px 0 46px; }
.desc { margin: 0; padding-top: 1.500px; width: 720px; font-size: 22px; line-height: 31.400px; font-weight: 500; color: #3d3d3d; white-space: nowrap; letter-spacing: -.2px; }
.desc span { display: block; }
.shot { width: 412px; height: 258px; background: #d9d9d9; display: flex; flex-direction: column; }
.shot-bar { height: 16px; background: #0861b3; display: flex; justify-content: flex-end; align-items: center; padding-right: 3px; flex: none; }
.shot-bar text { fill: #9cc2ea; }
.shot-main { height: 204px; display: flex; overflow: hidden; }
.side { width: 77px; background: #263036; color: #a3a8ab; font-size: 5.500px; display: flex; flex-direction: column; gap: 5px; padding: 171px 0 0 4px; line-height: 8px; white-space: nowrap; }
.tiles { padding: 37px 0 0 5px; display: grid; grid-template-columns: repeat(5, 60px); grid-template-rows: 49px 58px 60px; column-gap: 6px; row-gap: 5.500px; flex: none; }
.tiles > div { background: #dedede; border: 1px solid #d4d4d4; display: flex; flex-direction: column; align-items: center; padding-top: 6.500px; font-size: 5.300px; line-height: 7.500px; color: #555; text-align: center; white-space: nowrap; font-weight: 600; }
.tiles i { width: 21px; height: 21px; border-radius: 50%; display: grid; place-items: center; margin-bottom: 6px; flex: none; }
.tiles i svg { width: 10px; height: 10px; fill: none; stroke: rgba(255,255,255,.38); stroke-width: .8; }
.c1 { background: #259c9f; }
.c2 { background: #2e8c6c; }
.c3 { background: #6b9c4b; }
.c4 { background: #d0752f; }
.c5 { background: #cc5441; }
.c6 { background: #cf5876; }
.c7 { background: #c5578d; }
.c8 { background: #7b4690; }
.c9 { background: #47568f; }
.c10 { background: #929ca2; }
.c11 { background: #566b7b; }
.shot-title { flex: 1; display: flex; align-items: center; background: linear-gradient(90deg, #7c5a20 77px, #977431 77px); color: #ecdcba; font-size: 15.500px; font-weight: 500; letter-spacing: -.3px; padding-left: 12px; white-space: nowrap; }
.shot-title > span { flex: 0 0 155px; }
.ghosts { display: flex; gap: 45px; padding-top: 5px; }
.ghosts i { width: 21px; height: 21px; border-radius: 50%; background: rgba(100,90,20,.15); flex: none; }

.status { position: absolute; left: 0; bottom: 0; width: 407px; height: 19px; background: linear-gradient(#f9f9f9, #eee); font-size: 11px; letter-spacing: .22px; line-height: 19px; padding-left: 4.500px; color: #77797b; border-radius: 0 3px 0 0; white-space: nowrap; }

/* Dialog */
.modal { position: absolute; left: 219px; top: 75px; width: 782px; height: 470px; background: #fff; border: 1px solid #c0c0c0; box-shadow: 0 1px 5px rgba(0,0,0,.3); display: flex; flex-direction: column; align-items: center; }
.modal-head { width: 100%; height: 56px; display: flex; align-items: center; padding-left: 297.500px; }
.modal h1 { margin: 0; font-size: 22px; font-weight: 500; color: #484848; letter-spacing: -.08px; white-space: nowrap; }
.modal-head svg { width: 10px; height: 10px; margin: 0 22px 2px auto; }
.spinner { width: 62px; height: 63px; margin-top: 96px; }
.modal p { margin: 19px 0 0; font-size: 22px; line-height: 28px; color: #333; letter-spacing: -.58px; }

/* Screen sharing notice */
.share { position: absolute; left: 430px; top: 684px; width: 389px; height: 41px; background: rgba(255,255,255,.92); box-shadow: 0 1px 4px rgba(0,0,0,.45); display: flex; align-items: center; padding: 0 11px 0 10px; font-size: 12px; color: #55575a; white-space: nowrap; font-weight: 500; letter-spacing: -.28px; }
.share > i { width: 15px; font-style: normal; color: #ccc; font-size: 10px; }
.share button { width: 103px; height: 31px; border: 0; border-radius: 3px; background: #508eef; color: #e4edfd; font: 600 12px Inter, sans-serif; letter-spacing: -.15px; margin-left: auto; padding: 0; }
.share a { color: #3d6db6; margin-left: 10px; letter-spacing: -.1px; }

.cursor { position: absolute; left: 963px; top: 625px; width: 12px; height: 17px; }

/* Dock */
.dock { position: absolute; left: 29px; top: 737px; width: 1190px; height: 48px; background: linear-gradient(90deg, #53565b, #535b60 50%, #54555b); border-radius: 5px 5px 0 0; display: flex; padding: 2.500px 0 0 3.200px; }
.dock svg { width: 37.660px; height: 37.660px; overflow: visible; }
.dock text { font-family: Inter, sans-serif; }
.dock .run { background: radial-gradient(circle at 50% 40.500px, #0b0d10 2px, transparent 2.600px); height: 45px; padding-bottom: 7.340px; }
.dock-sep { width: 1px; height: 35px; background: #34373b; margin: 1px 8px 0 8px; flex: none; }
```
